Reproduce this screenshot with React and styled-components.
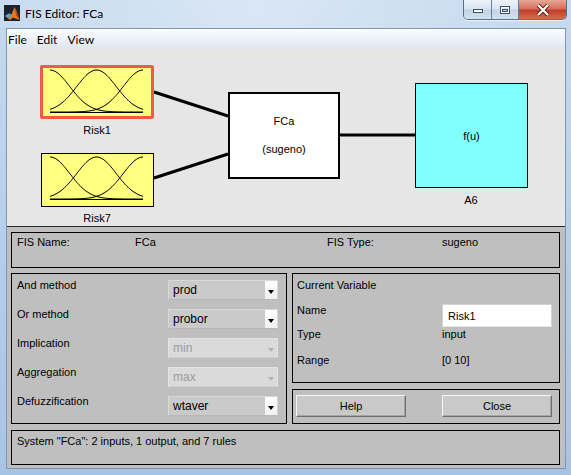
import React from 'react';
import styled, { createGlobalStyle } from 'styled-components';

const Global = createGlobalStyle`
  html, body { margin: 0; padding: 0; }
  body {
    width: 571px; height: 475px; overflow: hidden;
    font-family: "Liberation Sans", Arial, sans-serif;
  }
`;

const Window = styled.div`
  width: 571px; height: 475px; box-sizing: border-box;
  padding: 0 5px 6px 6px;
  display: flex; flex-direction: column;
  background: linear-gradient(180deg, #c6daef 0%, #b9d1eb 40%, #a8c4e5 100%);
`;

const TitleBar = styled.div`
  height: 28px; margin: 0 -5px 0 -6px; padding: 0 4px;
  display: flex; align-items: flex-start;
  background: linear-gradient(90deg, rgba(255,255,255,0.05) 0%, rgba(255,255,255,0.35) 45%, rgba(255,255,255,0.15) 75%, rgba(255,255,255,0) 100%);
`;

const TitleLeft = styled.div`
  display: flex; align-items: center; gap: 5px; height: 28px; margin-top: -1px;
`;

const TitleText = styled.span`
  font-family: Lato, "Open Sans", sans-serif; font-size: 12px; color: #000;
`;

const Caption = styled.div`
  margin-left: auto; display: flex; height: 19px;
  border: 1px solid #5b6f8b; border-top: none; border-radius: 0 0 5px 5px; overflow: hidden;
  box-shadow: 0 1px 0 rgba(255,255,255,0.6);
`;

const CapButton = styled.div`
  width: ${p => p.$w}px; height: 100%; box-sizing: border-box;
  display: flex; align-items: center; justify-content: center;
  border-left: ${p => (p.$first ? 'none' : '1px solid #6a7d98')};
  background: ${p => (p.$close
    ? 'linear-gradient(180deg, #e8a796 0%, #d6705c 45%, #c2402b 55%, #d46b4f 100%)'
    : 'linear-gradient(180deg, #eef3f9 0%, #d9e4f1 45%, #c3d4e8 55%, #d3e1f0 100%)')};
`;

const Client = styled.div`
  flex: 1; display: flex; flex-direction: column;
  border: 1px solid #8296b1; min-height: 0;
`;

const MenuBar = styled.div`
  height: 20px; display: flex; align-items: center; gap: 10px; padding-left: 1px;
  background: linear-gradient(180deg, #fbfcfe 0%, #eef1f7 50%, #dfe4ee 100%);
`;

const MenuItem = styled.span`
  font-family: Lato, "Open Sans", sans-serif; font-size: 12px; color: #000;
`;

const Diagram = styled.div`
  height: 177px; position: relative; background: #e6e6e6; flex-shrink: 0;
`;

const Wires = styled.svg`
  position: absolute; left: 0; top: 0;
`;

const MfBox = styled.div`
  position: absolute; left: ${p => p.$x}px; top: ${p => p.$y}px;
  width: ${p => p.$w}px; height: 54px; box-sizing: border-box;
  background: #ffff80;
  border: ${p => (p.$selected ? '3px solid #ef5a4c' : '1px solid #000')};
  border-radius: ${p => (p.$selected ? '2px' : '0')};
`;

const RuleBox = styled.div`
  position: absolute; left: 221px; top: 43px; width: 112px; height: 87px;
  box-sizing: border-box; background: #fff; border: 2px solid #000;
  display: flex; flex-direction: column; align-items: center;
  padding-top: 21px; gap: 16px;
  font-size: 11px; color: #000;
`;

const OutBox = styled.div`
  position: absolute; left: 408px; top: 34px; width: 113px; height: 105px;
  box-sizing: border-box; background: #80ffff; border: 1.5px solid #000;
  display: flex; align-items: center; justify-content: center;
  font-size: 11px; color: #000;
`;

const NodeLabel = styled.span`
  position: absolute; left: ${p => p.$cx}px; top: ${p => p.$cy - 7}px;
  transform: translateX(-50%);
  font-size: 11px; line-height: 14px; color: #000; white-space: nowrap;
`;

const Lower = styled.div`
  flex: 1; background: #bfbfbf; border-top: 1px solid #2a2a2a;
  padding: 5px 5px 3px 4px;
  display: flex; flex-direction: column; gap: 5px;
`;

const Panel = styled.div`
  box-sizing: border-box; border: 1px solid #000; height: ${p => p.$h}px;
`;

const InfoRow = styled.div`
  display: grid; grid-template-columns: 118px 192px 115px 1fr;
  padding: 3px 0 0 5px; font-size: 11px; line-height: 13px; color: #000;
`;

const Middle = styled.div`
  display: grid; grid-template-columns: 276px 1fr; gap: 5px; margin-bottom: 1px;
`;

const RightCol = styled.div`
  display: flex; flex-direction: column; gap: 6px;
`;

const MethodList = styled.div`
  padding: 5px 0 0 5px;
  display: grid; grid-template-columns: 151px 110px; grid-auto-rows: 29px;
  align-items: start;
`;

const Label = styled.span`
  font-size: 11px; line-height: 13px; color: #000;
  ${p => p.$top && `margin-top: ${p.$top}px;`}
`;

const Dropdown = styled.div`
  width: 110px; height: 20px; box-sizing: border-box; margin-top: 1px;
  display: flex; align-items: stretch;
  background: ${p => (p.$disabled ? '#dadada' : '#cacaca')};
  border: 1px solid ${p => (p.$disabled ? '#e4e4e4' : '#d8d8d8')};
  border-bottom-color: ${p => (p.$disabled ? '#d0d0d0' : '#b8b8b8')};
`;

const DropValue = styled.span`
  flex: 1; padding-left: 4px; display: flex; align-items: center;
  font-size: 12px; color: ${p => (p.$disabled ? '#9c9c9c' : '#000')};
`;

const DropArrow = styled.span`
  width: 12px; display: flex; align-items: center; justify-content: center;
  background: ${p => (p.$disabled ? 'transparent' : 'linear-gradient(180deg, #ffffff 0%, #f1f1f1 100%)')};
  &::after {
    content: ''; margin-top: 3px;
    border-left: 3.5px solid transparent; border-right: 3.5px solid transparent;
    border-top: 4px solid ${p => (p.$disabled ? '#b4b4b4' : '#000')};
  }
`;

const VarGrid = styled.div`
  padding: 5px 0 0 4px;
  display: grid; grid-template-columns: 145px 110px; grid-template-rows: 25px 24px 26px 13px;
  align-items: start;
`;

const TextField = styled.div`
  width: 110px; height: 23px; box-sizing: border-box;
  background: #fff; border: 1px solid #d2d2d2; border-bottom-color: #e8e8e8;
  display: flex; align-items: center; padding-left: 5px;
  font-size: 11px; color: #000;
`;

const ButtonRow = styled.div`
  display: flex; gap: 36px; padding: 5px 0 0 3px;
`;

const PushButton = styled.div`
  width: 110px; height: 22px; box-sizing: border-box;
  display: flex; align-items: center; justify-content: center;
  background: #c9c9c9; font-size: 11px; color: #000;
  border: 1px solid; border-color: #f6f6f6 #6e6e6e #6e6e6e #f6f6f6;
  box-shadow: inset -1px -1px 0 #a6a6a6;
`;

const StatusText = styled.div`
  padding: 4px 0 0 5px; font-size: 11px; line-height: 13px; color: #000;
`;

function gaussPath(x0, x2, top, bottom, kind) {
  const c1 = (x0 + x2) / 2;
  const sigma = (c1 - x0) / (2 * Math.sqrt(2 * Math.log(2)));
  const c = kind === 0 ? x0 : kind === 1 ? c1 : x2;
  const pts = [];
  for (let x = x0; x <= x2 + 0.01; x += 1) {
    const v = Math.exp(-((x - c) ** 2) / (2 * sigma * sigma));
    pts.push(`${x.toFixed(1)},${(bottom - v * (bottom - top)).toFixed(1)}`);
  }
  return pts.join(' ');
}

function MfCurves({ w, h, x0, x2, top, bottom }) {
  return (
    <svg width={w} height={h} style={{ display: 'block' }}>
      {[0, 1, 2].map(k => (
        <polyline key={k} points={gaussPath(x0, x2, top, bottom, k)} fill="none" stroke="#000" strokeWidth="1" />
      ))}
      <line x1={x0} y1={bottom + 0.5} x2={x2} y2={bottom + 0.5} stroke="#000" strokeWidth="1" />
    </svg>
  );
}

function MatlabIcon() {
  return (
    <svg width="16" height="16" viewBox="0 0 16 16">
      <rect x="0" y="0" width="16" height="16" fill="#1d2230" />
      <path d="M1 11 L5 8.5 L7.5 9.5 L10.5 2 L12.5 6 L15.5 15 L9 12.5 L6 15 Z" fill="#e67a22" />
      <path d="M10.5 2 L12.5 6 L15.5 15 L12 10 Z" fill="#b8420f" />
      <path d="M1 11 L5 8.5 L7.5 9.5 L6 13 Z" fill="#4fa9dc" />
    </svg>
  );
}

function Methods() {
  const rows = [
    ['And method', 'prod', false],
    ['Or method', 'probor', false],
    ['Implication', 'min', true],
    ['Aggregation', 'max', true],
    ['Defuzzification', 'wtaver', false],
  ];
  return (
    <MethodList>
      {rows.map(([label, value, dis]) => (
        <React.Fragment key={label}>
          <Label>{label}</Label>
          <Dropdown $disabled={dis}>
            <DropValue $disabled={dis}>{value}</DropValue>
            <DropArrow $disabled={dis} />
          </Dropdown>
        </React.Fragment>
      ))}
    </MethodList>
  );
}

export default function App() {
  return (
    <>
      <Global />
      <Window>
        <TitleBar>
          <TitleLeft>
            <MatlabIcon />
            <TitleText>FIS Editor: FCa</TitleText>
          </TitleLeft>
          <Caption>
            <CapButton $w={27} $first>
              <svg width="12" height="8" viewBox="0 0 12 8">
                <rect x="1.5" y="3.5" width="9" height="3" fill="#fff" stroke="#3c4d66" />
              </svg>
            </CapButton>
            <CapButton $w={27}>
              <svg width="12" height="10" viewBox="0 0 12 10">
                <rect x="1.5" y="1.5" width="9" height="7" fill="none" stroke="#3c4d66" />
                <rect x="2.5" y="2.5" width="7" height="5" fill="none" stroke="#fff" />
                <rect x="3.5" y="4.5" width="5" height="2" fill="none" stroke="#3c4d66" />
              </svg>
            </CapButton>
            <CapButton $w={48} $close>
              <svg width="14" height="12" viewBox="0 0 14 12">
                <path d="M2 1 L12 11 M12 1 L2 11" stroke="#5a1a10" strokeWidth="4" />
                <path d="M2 1 L12 11 M12 1 L2 11" stroke="#fff" strokeWidth="2.2" />
              </svg>
            </CapButton>
          </Caption>
        </TitleBar>
        <Client>
          <MenuBar>
            <MenuItem>File</MenuItem>
            <MenuItem>Edit</MenuItem>
            <MenuItem>View</MenuItem>
          </MenuBar>
          <Diagram>
            <Wires width="558" height="177">
              <line x1="147" y1="43" x2="221" y2="67" stroke="#000" strokeWidth="3" />
              <line x1="147" y1="129" x2="221" y2="105" stroke="#000" strokeWidth="3" />
              <line x1="333" y1="86" x2="408" y2="86" stroke="#000" strokeWidth="3" />
            </Wires>
            <MfBox $x={33} $y={16} $w={114} $selected>
              <MfCurves w={108} h={48} x0={7} x2={100} top={2} bottom={44} />
            </MfBox>
            <NodeLabel $cx={90} $cy={81}>Risk1</NodeLabel>
            <MfBox $x={34} $y={104} $w={113}>
              <MfCurves w={111} h={52} x0={8} x2={101} top={3} bottom={45} />
            </MfBox>
            <NodeLabel $cx={90} $cy={169}>Risk7</NodeLabel>
            <RuleBox>
              <span>FCa</span>
              <span>(sugeno)</span>
            </RuleBox>
            <OutBox>f(u)</OutBox>
            <NodeLabel $cx={464} $cy={151}>A6</NodeLabel>
          </Diagram>
          <Lower>
            <Panel $h={36}>
              <InfoRow>
                <span>FIS Name:</span>
                <span>FCa</span>
                <span>FIS Type:</span>
                <span>sugeno</span>
              </InfoRow>
            </Panel>
            <Middle>
              <Panel $h={151}>
                <Methods />
              </Panel>
              <RightCol>
                <Panel $h={110}>
                  <VarGrid>
                    <Label>Current Variable</Label>
                    <span />
                    <Label>Name</Label>
                    <TextField>Risk1</TextField>
                    <Label>Type</Label>
                    <Label>input</Label>
                    <Label>Range</Label>
                    <Label>[0 10]</Label>
                  </VarGrid>
                </Panel>
                <Panel $h={35}>
                  <ButtonRow>
                    <PushButton>Help</PushButton>
                    <PushButton>Close</PushButton>
                  </ButtonRow>
                </Panel>
              </RightCol>
            </Middle>
            <Panel $h={35}>
              <StatusText>System "FCa": 2 inputs, 1 output, and 7 rules</StatusText>
            </Panel>
          </Lower>
        </Client>
      </Window>
    </>
  );
}
